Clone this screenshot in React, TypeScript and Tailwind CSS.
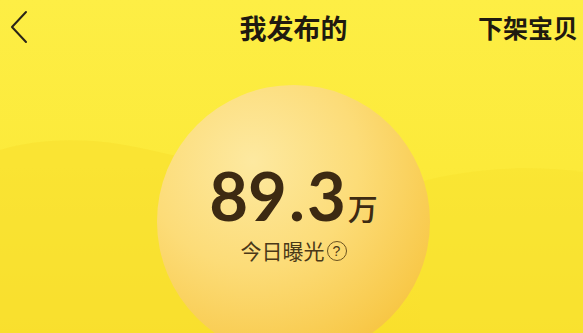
export default function App() {
  return (
    <div className="relative w-[583px] h-[333px] overflow-hidden bg-gradient-to-b from-[#fdee45] via-[#fcea3a] to-[#f9df2c] font-['Noto_Sans_CJK_SC',sans-serif]">
      {/* hills behind the ball */}
      <svg className="absolute left-0 top-0" width="583" height="333" viewBox="0 0 583 333">
        <path d="M0 150 C40 138 90 136 150 150 C200 162 240 168 290 175 L290 333 L0 333 Z" fill="#f8df2e" opacity="0.6" />
        <path d="M420 182 C470 168 530 165 583 172 L583 333 L420 333 Z" fill="#f9e230" opacity="0.6" />
      </svg>

      <div className="relative flex flex-col items-center">
        <div className="w-full h-[54px] grid grid-cols-[1fr_auto_1fr] items-center pl-[9px] pr-[5px]">
          <svg width="20" height="34" viewBox="0 0 20 34" fill="none">
            <path d="M17 2 L3 17 L17 32" stroke="#2a2418" strokeWidth="2" strokeLinecap="round" strokeLinejoin="round" />
          </svg>
          <span className="text-[27px] font-bold text-[#1f1a10] leading-none">我发布的</span>
          <span className="justify-self-end text-[25px] font-bold text-[#1f1a10] leading-none">下架宝贝</span>
        </div>

        <div className="mt-[31px] ml-[4px] w-[273px] h-[273px] rounded-full bg-[radial-gradient(circle_at_35%_28%,#fde9a0_0%,#fcdc78_40%,#f8c94a_75%,#f3b42c_100%)] flex flex-col items-center">
          <div className="mt-[80px] flex items-end text-[#3d2a12] font-['Lato',sans-serif] font-bold">
            <span className="text-[67px] leading-[60px]">89</span>
            <span className="mx-[2px] text-[67px] leading-[60px]">.</span>
            <span className="text-[67px] leading-[60px]">3</span>
            <span className="ml-[2px] mb-[3px] text-[30px] leading-none font-['Noto_Sans_CJK_SC',sans-serif] font-medium">万</span>
          </div>
          <div className="mt-[15px] flex items-center text-[21px] leading-none text-[#4a3818]">
            <span>今日曝光</span>
            <span className="ml-[2px] w-[20px] h-[20px] rounded-full border-[1.5px] border-[#6b5220] flex items-center justify-center text-[14px] font-['Liberation_Sans',sans-serif]">?</span>
          </div>
        </div>
      </div>
    </div>
  )
}
